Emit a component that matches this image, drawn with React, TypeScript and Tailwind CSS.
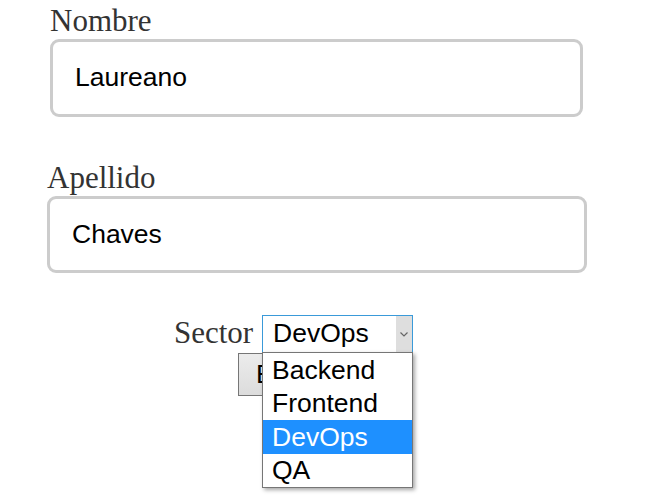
import React from "react";

const serif = { fontFamily: '"Liberation Serif", "Times New Roman", serif' };
const sans = { fontFamily: '"Liberation Sans", Arial, sans-serif' };

export default function App() {
  return (
    <div className="w-[669px] h-[504px] bg-white overflow-hidden relative">
      <div className="pt-[3px]">
        <div className="ml-[50px] w-[533px]">
          <div style={serif} className="text-[31px] leading-[36px] h-[36px] text-[#333]">Nombre</div>
          <div
            style={sans}
            className="h-[78px] border-[3px] border-[#cccccc] rounded-[9px] flex items-center pl-[22px] text-[26.5px] text-black"
          >
            Laureano
          </div>
        </div>

        <div className="ml-[47px] w-[540px] mt-[43px]">
          <div style={serif} className="text-[31px] leading-[36px] h-[36px] text-[#333]">Apellido</div>
          <div
            style={sans}
            className="h-[77px] border-[3px] border-[#cccccc] rounded-[9px] flex items-center pl-[22px] text-[26.5px] text-black"
          >
            Chaves
          </div>
        </div>

        <div className="mt-[42px] flex items-start">
          <div style={serif} className="ml-[174px] w-[88px] text-[31px] leading-[36px] h-[36px] text-[#333]">
            Sector
          </div>
          <div className="relative">
            <div
              style={sans}
              className="w-[151px] h-[38px] border border-[#3a9ad9] bg-white flex items-center text-[26.5px] text-black"
            >
              <div className="flex-1 pl-[10px]">DevOps</div>
              <div className="w-[16px] h-full bg-[#dedede] flex items-center justify-center">
                <svg width="8" height="5" viewBox="0 0 8 5">
                  <path d="M0.5 0.5 L4 4 L7.5 0.5" stroke="#666" strokeWidth="1.2" fill="none" />
                </svg>
              </div>
            </div>
            <div
              style={sans}
              className="absolute left-0 top-[37px] w-[151px] border border-[#767676] bg-white text-[26.5px] text-black z-10 shadow-[2px_2px_4px_rgba(0,0,0,0.35)]"
            >
              <div className="h-[34px] leading-[34px] pl-[9px]">Backend</div>
              <div className="h-[33px] leading-[33px] pl-[9px]">Frontend</div>
              <div className="h-[34px] leading-[34px] pl-[9px] bg-[#1e90ff] text-white">DevOps</div>
              <div className="h-[33px] leading-[33px] pl-[9px]">QA</div>
            </div>
          </div>
        </div>

        <div className="ml-[238px]">
          <button
            style={sans}
            className="h-[43px] px-[17px] border border-[#767676] bg-gradient-to-b from-[#ececec] to-[#dcdcdc] text-[26.5px] text-black leading-none"
          >
            Enviar
          </button>
        </div>
      </div>
    </div>
  );
}
